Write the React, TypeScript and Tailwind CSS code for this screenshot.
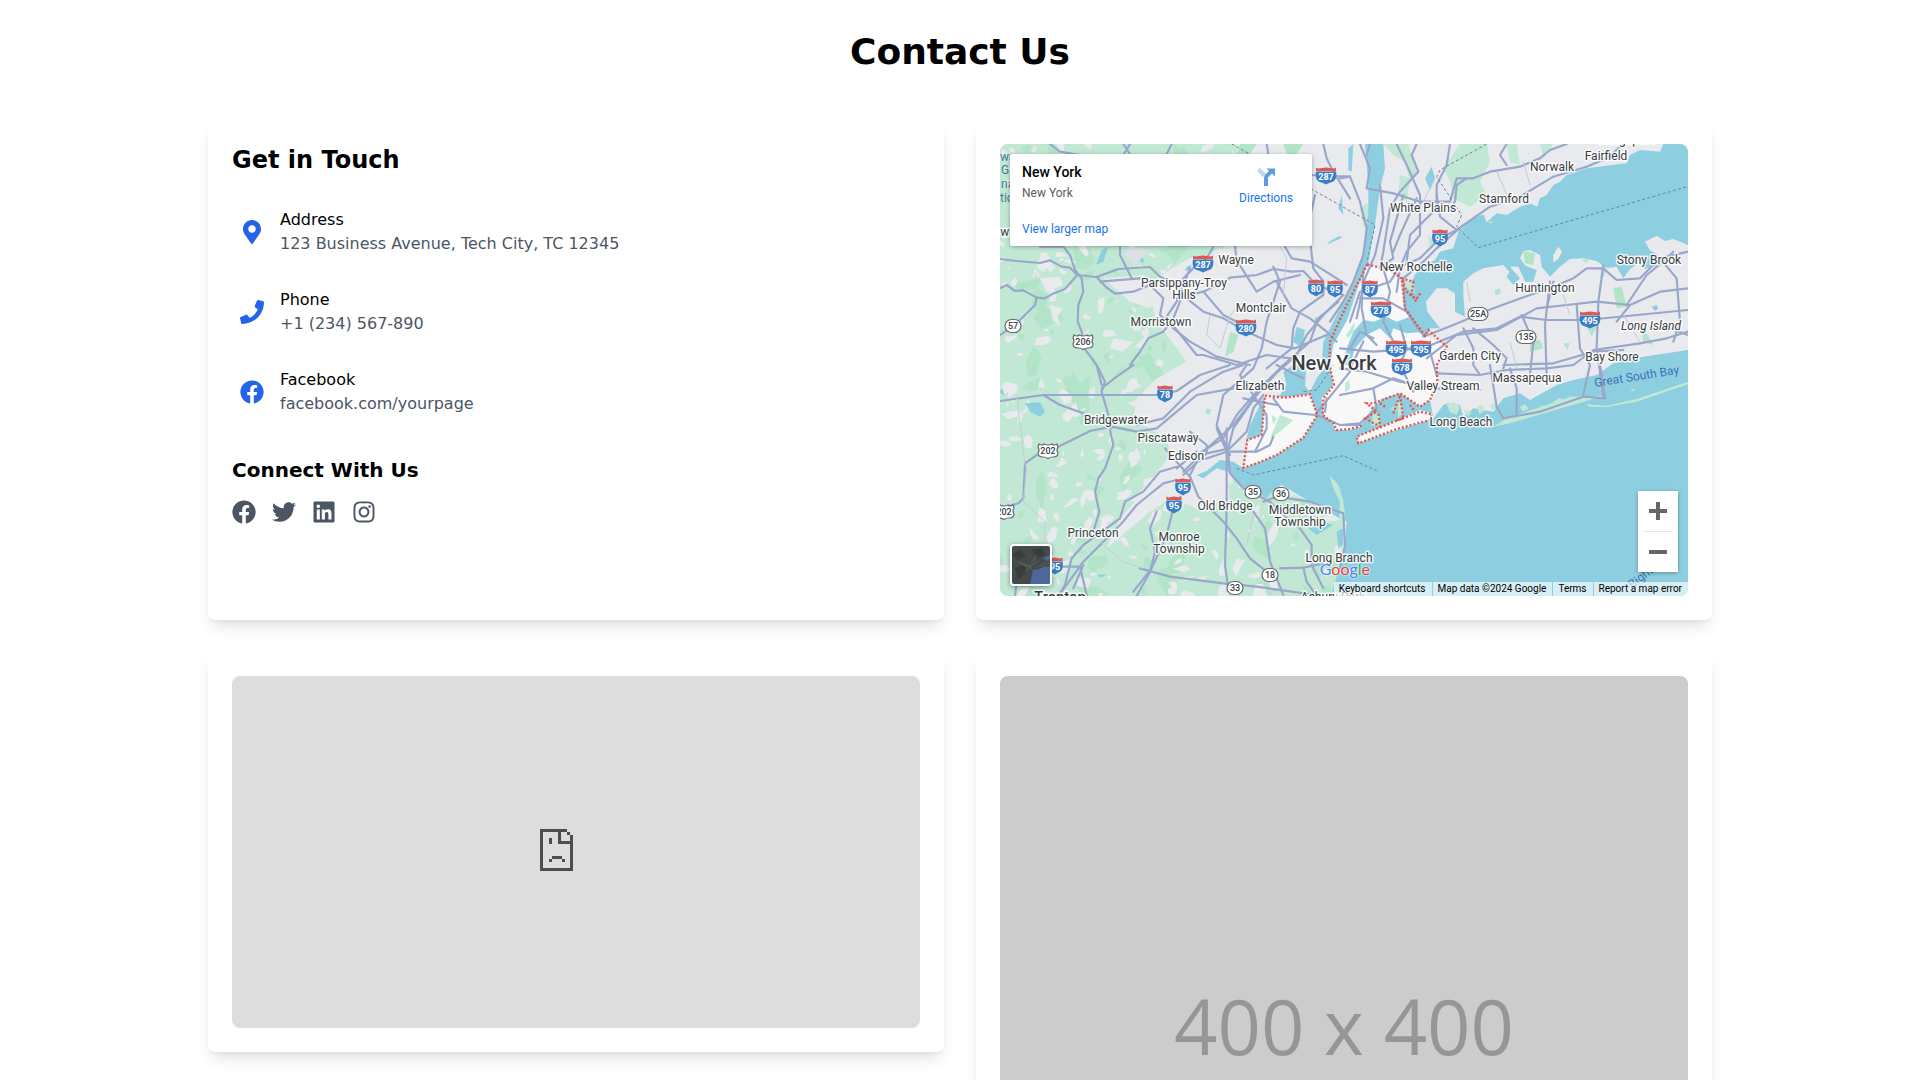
import React from "react";
import { FaFacebook, FaInstagram, FaLinkedin, FaMapMarkerAlt, FaPhone, FaTwitter } from "react-icons/fa";

const LAND = "#e8eaed";
const GREEN = "#c1e8d4";
const DEEP_GREEN = "#b2e4c8";
const WATER = "#8dcfe0";
const CITY = "#f8f8f9";
const ROAD = "#98a7ca";
const BORDER = "#e5554b";

/* Irregular parcels of farmland and forest, generated from a fixed seed. */
function parcels(seed: number, count: number, size: number): string {
  let s = seed;
  const next = () => {
    s = (s * 1103515245 + 12345) % 2147483648;
    return s / 2147483648;
  };
  let d = "";
  for (let i = 0; i < count; i++) {
    const cx = 30 + next() * 1060;
    const cy = 27 + next() * 1370;
    const tilt = next() * 3.14;
    const r = size * (0.3 + next() * 1.1);
    for (let k = 0; k < 6; k++) {
      const a = (k * 6.28) / 6;
      const q = r * (0.3 + next() * 0.9);
      const px = Math.cos(a) * q * 1.5;
      const py = Math.sin(a) * q * 0.8;
      const x = Math.round(cx + px * Math.cos(tilt) - py * Math.sin(tilt));
      const y = Math.round(cy + px * Math.sin(tilt) + py * Math.cos(tilt));
      d += `${k === 0 ? "M" : "L"}${x} ${y}`;
    }
    d += "Z";
  }
  return d;
}

const greyParcels = parcels(77, 380, 17);
const deepParcels = parcels(1234, 120, 32);

const westRoads = [
  "M30 372 L80 378 L150 384 L180 376 L215 395 L240 398 L262 420 L320 426 L385 402 L480 396 L510 425 L545 440 L590 490 L640 530 L700 550 L770 590 L860 630 L915 640 L1010 600",
  "M30 460 L50 450 L75 468 L100 466 L140 488 L165 490 L185 478 L225 462 L262 420",
  "M140 488 L135 510 L100 545 L75 570 L30 600",
  "M150 335 L220 335 L240 360 L255 405 L275 430 L280 470 L265 510 L263 560 L275 590 L283 640 L320 690 L335 750",
  "M320 426 L350 458 L375 476 L430 470 L480 450",
  "M330 440 L450 430 M390 335 L390 360 L410 400 L425 430",
  "M670 335 L650 370 L610 400 L580 430 L570 500 L550 550 L520 590 L475 610 L450 650 L420 690",
  "M480 450 L520 490 L510 540 L550 580 L600 620 L680 665 L780 690",
  "M640 470 L700 540 L740 560 M690 450 L720 428 L800 420 L850 402 L905 410 L940 408 L980 450 L1060 480",
  "M735 335 L740 375 L765 415 L800 470 L850 440 L930 420",
  "M850 395 L870 440 L830 560 L815 640 L790 700 L700 780 L680 870 L720 960",
  "M885 335 L905 370 L960 380 L1040 430 L1070 450",
  "M975 180 L955 270 L970 400 L1000 440 L1000 480 L930 530 L910 580 L905 640 L830 700",
  "M860 440 L905 520 L960 550 L1010 590 L1040 620",
  "M1060 480 L1000 540 L950 600 L920 660 L830 740 L730 870 L640 950 L580 1010",
  "M1045 500 L985 550 L960 620 L880 690 L800 780 L730 880 L710 960",
  "M540 560 L620 660 L640 660 L740 690 L830 660 L900 670",
  "M420 27 L400 60 M180 27 L210 50 L270 60 M400 27 L420 57 M530 57 L545 27",
  "M1000 27 L1010 70 L1030 110 L1080 190 M960 120 L1080 125 M830 27 L835 57",
  "M600 400 L560 500 L520 560 M700 440 L640 470 L560 490",
];

const southWestRoads = [
  "M30 108 L160 90 L330 90 L500 90 L560 78 L630 30 L720 0",
  "M320 0 L345 50 L335 80 L355 150 L365 190",
  "M160 90 L210 120 L280 145 M430 0 L380 35 L335 70",
  "M205 245 L300 198 L365 185 L440 200 L500 190 L560 140 L620 90 L730 70",
  "M440 180 L520 160 L600 80 L700 20 L760 0",
  "M360 195 L370 240 L345 310 L325 340 L315 380 L328 440 L310 500",
  "M140 270 L105 295 L100 400 L85 415 L50 425",
  "M560 305 L510 320 L460 380 L405 410 L390 460 L280 540 L245 580 L225 660 L205 693",
  "M560 345 L520 355 L440 420 L395 475 L280 590 L215 680",
  "M525 250 L560 290 L600 335 L625 395 L700 470 L740 520 L780 580 L830 620",
  "M620 260 L560 310 M600 330 L620 290 L710 260 L800 260 L840 240 L850 215",
  "M710 190 L710 430 L705 600 L715 670",
  "M680 190 L715 270 L720 325 L760 370 L840 410 L880 450 L930 490 L965 540 L965 600 L1000 670",
  "M790 440 L825 490 L840 590 L880 690",
  "M820 410 L860 395 L960 410 L1060 445 L1065 540 L1050 610",
  "M570 395 L550 430 L530 510 L485 610 L430 680",
  "M500 440 L480 490 L495 560 L480 620 L440 693",
  "M450 610 L540 635 L700 655 L800 665 L1000 693 M870 610 L940 608 L1000 595",
  "M185 605 L270 605 L290 690 M75 693 L80 650 M280 600 L250 670",
  "M820 90 L790 130 L770 200 L720 250 L650 265 L580 330",
  "M800 80 L740 150 L700 220 L620 270 M760 100 L860 120 M850 100 L880 140 L975 150 L1040 70 L1080 20",
  "M980 150 L1050 180 L1110 180 M1010 100 L1005 140 M940 608 L950 650 L980 693",
  "M770 0 L750 30 L790 90 L830 150 L830 190 L810 230 L795 260",
  "M880 0 L820 60 L780 110 M860 0 L900 20 L940 40 M600 200 L650 240 L650 265",
];

const eastRoads = [
  "M60 27 L90 100 L80 160 L160 175 L240 200 L330 200 L350 130 L400 130 L450 110 L540 95 L600 70 L630 45 L680 27",
  "M345 200 L350 150 L380 130 M290 180 L300 245 L350 285 L450 215 L540 185 L640 125 L740 95 L800 70 L850 27",
  "M0 130 L30 125 L60 200 L80 280 L70 360 L40 440 L10 500 L-30 560",
  "M170 27 L200 90 L240 180 L240 300 L200 350 L180 400 L170 470",
  "M230 27 L215 60 L235 110 L180 170 L150 220 L130 350 L120 400",
  "M330 27 L320 90 L290 150 L290 220 L210 300 L200 380",
  "M350 285 L300 310 L240 370 L180 395 L150 440 L60 470 L30 560",
  "M370 270 L290 340 L250 380 L190 430 L195 520 L240 590",
  "M190 180 L170 250 L150 320 L160 370 L130 390 M230 190 L180 300 L160 350 M120 150 L130 250 L105 360 L75 430 L50 550",
  "M70 400 L65 520 L80 600 L110 630 M130 400 L150 470 L130 560 L160 620",
  "M60 490 L130 490 L200 530 L250 600",
  "M250 605 L340 570 L460 520 L570 480 L630 460 L700 430 L740 400 L790 400 L830 435 L900 430 L960 370 L1044 350",
  "M0 640 L100 650 L250 640 L370 590 L470 580 L540 545 L620 555 L740 555 L1044 525",
  "M260 670 L350 600 L470 585 L590 520 L680 510 L770 500 L870 510 L960 470 L1044 460",
  "M400 580 L460 630 L500 670 L490 700 M370 580 L400 640 L400 690 L420 720 M545 540 L580 620 L570 720",
  "M630 440 L615 570 L620 720 M710 510 L720 640 L750 690 L730 780 M790 390 L775 500 L770 640 L790 780",
  "M860 510 L920 420 L970 380 L1000 350 M960 370 L1010 430 L1020 560 L1000 620",
  "M700 690 L760 645 L900 625 L980 610 L1044 590 M490 690 L640 685 L760 650 L850 645",
  "M290 715 L420 720 L500 705 L620 700 L700 690 M640 440 L620 520",
  "M830 560 L870 510 M0 700 L80 710 L180 740 L290 760 L420 765 M0 780 L100 760 L160 730 L250 760",
  "M450 690 L470 815 L490 850 L600 830 L730 785 L795 790 L780 690",
  "M510 700 L530 760 L530 840 M180 570 L200 640 L270 650 L290 720 M30 640 L60 590 L100 610",
  "M0 870 L60 865 L110 820 L100 760 M200 640 L180 690 L220 770 M70 620 L30 700",
  "M960 570 L1044 600 M500 27 L480 60 L500 90 M90 27 L80 60",
];

type Label = { x: number; y: number; t: string; cls?: string };
const labels: Label[] = [
  { x: 246, y: 129, t: "Wayne" },
  { x: 194, y: 152, t: "Parsippany-Troy" },
  { x: 194, y: 164, t: "Hills" },
  { x: 271, y: 177, t: "Montclair" },
  { x: 171, y: 191, t: "Morristown" },
  { x: 270, y: 255, t: "Elizabeth" },
  { x: 126, y: 289, t: "Bridgewater" },
  { x: 178, y: 307, t: "Piscataway" },
  { x: 196, y: 325, t: "Edison" },
  { x: 235, y: 375, t: "Old Bridge" },
  { x: 310, y: 379, t: "Middletown" },
  { x: 310, y: 391, t: "Township" },
  { x: 103, y: 402, t: "Princeton" },
  { x: 189, y: 406, t: "Monroe" },
  { x: 189, y: 418, t: "Township" },
  { x: 349, y: 427, t: "Long Branch" },
  { x: 433, y: 77, t: "White Plains" },
  { x: 514, y: 68, t: "Stamford" },
  { x: 562, y: 36, t: "Norwalk" },
  { x: 616, y: 25, t: "Fairfield" },
  { x: 426, y: 136, t: "New Rochelle" },
  { x: 659, y: 129, t: "Stony Brook" },
  { x: 555, y: 157, t: "Huntington" },
  { x: 661, y: 195, t: "Long Island", cls: "italic" },
  { x: 480, y: 225, t: "Garden City" },
  { x: 622, y: 226, t: "Bay Shore" },
  { x: 537, y: 247, t: "Massapequa" },
  { x: 453, y: 255, t: "Valley Stream" },
  { x: 471, y: 291, t: "Long Beach" },
  { x: 18, y: 101, t: "wn" },
];

const interstates: [number, number, string][] = [
  [336, 41, "287"], [213, 129, "287"], [326, 153, "80"], [345, 154, "95"], [256, 193, "280"],
  [450, 103, "95"], [380, 154, "87"], [391, 175, "278"], [406, 214, "495"], [431, 214, "295"],
  [412, 232, "678"], [600, 185, "495"], [175, 259, "78"], [193, 352, "95"], [184, 370, "95"], [65, 431, "95"],
];

const routes: [number, number, string][] = [
  [23, 191, "57"], [488, 179, "25A"], [536, 202, "135"], [263, 357, "35"], [291, 359, "36"], [280, 440, "18"], [245, 453, "33"],
];

const usRoutes: [number, number, string][] = [[93, 207, "206"], [58, 316, "202"], [14, 377, "202"]];

function Interstate({ x, y, n }: { x: number; y: number; n: string }) {
  const w = n.length > 2 ? 10 : 7.5;
  return (
    <g transform={`translate(${x} ${y})`}>
      <path d={`M${-w} -8.500 L${-w + 2} -7.500 L0 -8.500 L${w - 2} -7.500 L${w} -8.500 V-5 H${-w} Z`} fill="#e0584f" />
      <path
        d={`M${-w} -4.500 H${w} C${w + 1} 0 ${w} 5 ${w * 0.6} 6 Q${w * 0.2} 7 0 8.500 Q${-w * 0.2} 7 ${-w * 0.6} 6 C${-w} 5 ${-w - 1} 0 ${-w} -4.500 Z`}
        fill="#3b7dc6"
      />
      <text y="4" textAnchor="middle" className="fill-white text-[9px] font-bold">{n}</text>
    </g>
  );
}

function Route({ x, y, n }: { x: number; y: number; n: string }) {
  const w = n.length > 2 ? 10 : 8;
  return (
    <g transform={`translate(${x} ${y})`}>
      <rect x={-w} y="-6.5" width={w * 2} height="13" rx="6.5" fill="#fff" stroke="#666a6e" strokeWidth="1.2" />
      <text y="3" textAnchor="middle" className="fill-[#3c4043] text-[9px] font-medium">{n}</text>
    </g>
  );
}

function UsRoute({ x, y, n }: { x: number; y: number; n: string }) {
  return (
    <g transform={`translate(${x} ${y})`}>
      <path d="M-9 -7 Q-6 -5 -4 -7 Q0 -5 4 -7 Q6 -5 9 -7 L10 -4 Q8 -1 10 2 Q10 6 5 6 Q2 6 0 7.5 Q-2 6 -5 6 Q-10 6 -10 2 Q-8 -1 -10 -4 Z" fill="#fff" stroke="#666a6e" strokeWidth="1.2" />
      <text y="3" textAnchor="middle" className="fill-[#3c4043] text-[9px] font-medium">{n}</text>
    </g>
  );
}

function MapDrawing() {
  return (
    <svg
      viewBox="10 9 688 452"
      preserveAspectRatio="xMidYMid slice"
      className="block h-full w-full font-[Roboto,sans-serif]"
      role="img"
      aria-label="Map of New York"
    >
      <defs>
        <clipPath id="forest">
          <path d="M30 27 H740 L730 330 L690 350 L600 370 L545 400 L470 450 L500 560 L560 640 L590 680 L500 730 L440 790 L430 860 L530 900 L540 960 L480 1040 L420 1100 L520 1080 L640 1130 L690 1090 L730 1030 L790 1060 L870 1060 L1000 1120 L1060 1150 L1050 1400 H30 Z" />
        </clipPath>
      </defs>
      <g transform="scale(0.333333)">
        <rect x="0" y="0" width="2120" height="1410" fill={LAND} />
        <g clipPath="url(#forest)">
          <rect x="0" y="0" width="1100" height="1410" fill={GREEN} />
          <path d={deepParcels} fill={DEEP_GREEN} />
          <path d={greyParcels} fill={LAND} />
          <path d="M150 430 L210 425 L220 450 L170 470 Z M340 430 L460 420 L520 460 L480 520 L420 500 Z M370 610 L430 620 L400 650 L360 640 Z M180 510 L220 520 L190 560 Z M600 1020 L710 1000 L720 1100 L640 1110 Z M390 1150 L470 1060 L540 1010 L560 1080 L480 1130 L350 1240 Z" fill={LAND} />
        </g>
        <path d="M720 590 L745 600 L730 650 L705 665 Z M650 820 l15 5 l-8 14 l-12 -6 Z M750 27 L800 27 L780 57 L740 57 Z M880 27 L940 27 L920 57 L890 57 Z" fill={DEEP_GREEN} />
        <path d="M400 360 L430 335 L480 345 L430 390 Z" fill="#dcdfe4" />
        <path d="M335 345 L355 335 L340 380 L318 390 Z M1020 318 L1050 302 L1056 308 L1012 328 Z M450 372 L460 368 L462 382 L453 384 Z M920 575 L945 585 L935 640 L910 620 Z M975 548 L995 545 L970 590 Z M590 395 L605 390 L600 405 L585 408 Z" fill={WATER} />

        <g transform="translate(1050 0)">
          <path d="M130 27 H205 L215 60 L230 110 L210 140 L195 80 L160 60 Z M310 100 L360 27 H440 L450 80 L420 140 L440 180 L390 215 L340 190 L330 140 Z M500 27 H530 L540 90 L510 80 Z M600 27 H640 L610 70 Z M180 120 L210 130 L200 200 L175 180 Z M60 220 L80 205 L95 215 L85 290 L70 270 Z M265 300 L290 320 L270 345 Z" fill={GREEN} />
          <path d="M75 27 H130 L135 100 L120 160 L105 270 L85 385 L55 450 L20 560 L-20 630 L-25 690 L-55 690 L-50 620 L0 520 L50 420 L75 330 L85 230 L85 150 Z" fill={WATER} />
          <path d="M25 40 L40 27 L35 110 L25 105 Z M-5 220 L5 180 L10 240 Z M255 130 L275 95 L285 130 L270 165 Z" fill={WATER} />
          <path d="M970 27 H1044 V330 L1000 312 L975 318 L950 302 L915 320 L930 345 L955 360 L950 392 L915 402 L895 385 L870 402 L850 430 L830 395 L800 400 L770 378 L730 370 L690 372 L660 395 L630 425 L605 395 L600 360 L570 345 L550 348 L540 370 L556 392 L590 405 L580 440 L556 440 L535 395 L510 395 L540 430 L520 450 L500 425 L508 410 L490 390 L430 400 L400 415 L370 440 L370 480 L375 545 L345 530 L345 475 L320 460 L290 460 L258 500 L262 530 L300 580 L270 580 L258 605 L235 580 L200 530 L185 470 L215 440 L235 400 L285 375 L300 350 L340 340 L355 290 L400 250 L430 238 L440 262 L470 235 L500 240 L540 215 L570 205 L592 215 L600 190 L620 180 L640 150 L660 140 L680 120 L740 100 L860 85 L870 60 L900 45 L960 50 Z" fill={WATER} />
          <path d="M640 360 L655 335 L666 350 L655 372 L640 382 Z" fill={LAND} />
          <path d="M550 348 L585 355 L580 390 L555 385 Z M465 465 L480 460 L482 478 L465 480 Z M725 375 L745 372 L740 385 Z M820 460 L845 455 L860 515 L830 520 Z M740 575 L770 575 L755 605 Z M900 560 L940 630 L910 620 Z M570 620 L600 615 L610 640 L570 650 Z M440 260 L460 258 L455 267 Z M780 400 L800 395 L790 430 Z M865 680 L930 670 L910 700 L880 705 Z M30 560 L45 560 L25 610 L15 600 Z M670 625 l20 0 l-8 20 Z" fill={DEEP_GREEN} />
          <path d="M935 515 L950 510 L955 520 L945 528 Z M955 560 L965 560 L960 575 Z" fill={WATER} />
        </g>

        <g transform="translate(0 690)">
          <path d="M820 100 L780 180 L770 220 L760 310 L790 300 L840 280 L900 240 L945 215 L980 160 L970 100 L945 60 L950 0 L920 0 L900 40 L870 90 Z" fill={WATER} />
          <path d="M760 310 L790 300 L840 280 L900 240 L945 215 L980 150 L955 90 L980 40 L1010 0 L1050 0 L1030 70 L1000 110 L1000 150 L1030 180 L1035 195 L1080 195 L1110 185 L1150 125 L1180 110 L1230 85 L1290 120 L1320 105 L1330 160 L1360 120 L1375 115 L1410 120 L1420 155 L1450 130 L1510 140 L1540 100 L1590 85 L1620 105 L1700 60 L1750 45 L1820 30 L1870 -5 L1930 -20 L2094 -45 V700 H1020 L1050 600 L1065 530 L1070 470 L1040 455 L1000 430 L950 405 L900 375 L875 360 L850 375 L830 400 L780 380 L740 350 L715 320 L680 310 L640 340 L620 330 L650 318 L690 285 L730 290 Z" fill={WATER} />
          <path d="M105 115 L150 112 L165 140 L150 155 L120 140 Z M880 20 L910 0 L940 30 L925 80 L890 60 Z M320 628 l30 2 l-20 8 Z M30 80 l8 -10 l5 25 Z" fill={WATER} />
          <path d="M1018 330 L1045 360 L1058 400 L1066 450 L1055 500 L1048 460 L1050 410 L1030 370 Z" fill={GREEN} />
          <path d="M955 490 L1000 470 L1030 480 L980 510 Z M1040 500 L1060 490 L1060 540 L1045 550 Z" fill={WATER} />
          <path d="M825 92 L880 96 L960 88 L982 150 L940 218 L860 270 L800 295 L760 308 L772 225 L815 210 Z" fill={CITY} />
          <path d="M870 150 L910 165 L870 200 L840 220 Z M845 150 L860 160 L850 180 Z" fill={GREEN} />
        </g>

        <path d="M1132 388 L1200 405 L1230 430 L1245 520 L1305 602 L1370 635 L1340 690 L1340 740 L1320 795 L1290 815 L1230 775 L1180 800 L1150 815 L1110 875 L1080 882 L1040 885 L1030 870 L1000 840 L995 790 L1030 750 L1020 690 L1030 630 L1080 540 Z" fill={CITY} />
        <path d="M1240 435 L1270 440 L1275 475 L1250 460 Z M1068 600 L1095 560 L1090 590 L1075 610 Z M1065 745 l12 -10 l4 25 l-16 12 Z" fill={GREEN} />
        <path d="M1300 590 L1260 545 L1220 560 L1190 545 L1150 560 L1120 555 L1090 590 L1070 640 L1060 690 L1080 690 L1095 640 L1130 600 L1170 580 L1200 610 L1210 580 L1250 595 Z" fill={WATER} />
        <path d="M1150 815 L1180 790 L1230 775 L1290 815 L1250 850 L1200 865 L1155 870 Z" fill={WATER} />
        <path d="M1150 830 L1170 845 L1165 875 L1145 870 Z M1220 780 L1240 830 L1225 850 Z M1200 820 l18 -8 l4 16 Z" fill={GREEN} />
        <path d="M1105 925 L1100 905 L1200 865 L1290 825 L1325 835 L1320 855 L1220 885 Z" fill={CITY} />
        <path d="M1510 875 L1550 850 L1740 785 L1840 783 L1560 865 Z M1790 808 L1850 812 L1940 792 L2094 740 L2094 748 L1940 800 L1850 816 L1795 815 Z M1650 815 l20 -6 l8 12 l-20 6 Z M1690 800 l20 -12 l10 8 l-18 12 Z M1370 810 l20 -10 l20 15 l-10 25 l-20 -8 Z M1420 825 l25 5 l-10 15 Z M1460 815 l18 -8 l6 22 l-16 8 Z M1500 810 l14 -6 l4 16 l-12 6 Z M1590 815 l16 -8 l10 14 l-18 8 Z M1920 765 l15 -6 l-4 10 Z" fill={GREEN} />

        <g fill="none" stroke={ROAD} strokeWidth="6.5" strokeLinejoin="round" strokeLinecap="round">
          {westRoads.map((d) => <path key={d} d={d} />)}
          <g transform="translate(0 690)">{southWestRoads.map((d) => <path key={d} d={d} />)}</g>
          <g transform="translate(1050 0)">{eastRoads.map((d) => <path key={d} d={d} />)}</g>
        </g>
        <g fill="none" stroke="#c3cbdb" strokeWidth="3">
          <path d="M660 540 L650 600 L690 640 L720 540 L760 500 M870 335 L890 370 L880 480 M80 780 L105 990 M110 1000 L100 1100 L165 1160 L165 1220 M330 1220 L400 1280 L460 1300 M770 1230 L790 1140 M1430 440 L1440 500 M1720 480 L1740 540 M1300 200 L1330 140 M1520 110 L1560 200 M1600 80 L1620 150 M1560 620 L1580 700 M1900 540 L1950 620" />
        </g>
        <g fill="none" stroke="#6f8296" strokeWidth="3" strokeDasharray="9 7">
          <path d="M725 27 L1155 270 L1130 385 M2088 156 L1465 338 L1400 275 L1415 240 L1340 125 L1350 105 L1490 27 M940 770 L980 765 L1030 690 M740 1000 L790 1020 L1060 962 L1160 1007" />
        </g>
        <g fill="none" stroke={BORDER} strokeWidth="7" strokeDasharray="6 6">
          <path d="M1132 388 L1070 510 L1020 620 L1018 690 L1032 750 L1000 790 L998 840 L1030 865 L1040 885 L1080 882 L1115 872 M1132 388 L1200 405 L1235 430 L1245 520 L1305 602 L1315 585 L1370 635 L1340 690 L1342 740 L1320 795 L1290 815 L1230 775 L1150 805 L1130 805 L1160 830 L1125 850 L1170 875 L1165 830 M1235 430 L1270 440 L1265 480 L1280 495 L1250 470 Z M1290 475 L1275 500 M1105 925 L1100 905 L1200 865 L1290 830 L1325 838 L1320 855 L1220 882 Z M1210 835 L1230 780 L1240 850 L1220 855 M1260 810 L1275 830 M1170 805 L1185 815" />
          <path d="M825 782 L880 788 L960 778 L982 840 L940 908 L860 960 L800 985 L760 998 L772 915 L815 900 Z" />
        </g>
      </g>

      {interstates.map(([x, y, n], i) => <Interstate key={i} x={x} y={y} n={n} />)}
      {routes.map(([x, y, n]) => <Route key={n} x={x} y={y} n={n} />)}
      {usRoutes.map(([x, y, n], i) => <UsRoute key={i} x={x} y={y} n={n} />)}
      <g textAnchor="middle" className="fill-[#3a3d41] stroke-white/80 stroke-[3px] text-[12px] [paint-order:stroke]" strokeLinejoin="round">
        {labels.map((l, i) => (
          <text key={i} x={l.x} y={l.y} className={l.cls}>{l.t}</text>
        ))}
        <text x="344" y="235" className="text-[20px] font-medium">New York</text>
        <text x="70" y="467" className="text-[15px] font-medium">Trenton</text>
        <text x="343" y="466">Asbury Park</text>
        <text x="636" y="9">Bridgeport</text>
      </g>
      <g className="fill-[#3f7f95] text-[12px]">
        <text x="10" y="26">wa</text>
        <text x="11" y="39">G</text>
        <text x="11" y="53">na</text>
        <text x="10" y="67">tio</text>
      </g>
      <g className="fill-[#4270b8] text-[12px]">
        <text transform="translate(605 252) rotate(-9)">Great South Bay</text>
        <text transform="translate(642 454) rotate(-38)">Bight</text>
      </g>
    </svg>
  );
}

function MapView() {
  return (
    <div className="relative h-[452px] w-full overflow-hidden rounded-lg font-[Roboto,sans-serif]">
      <MapDrawing />

      <div className="absolute top-[10px] left-[10px] flex h-[92px] w-[302px] justify-between rounded-xs bg-white py-[9px] pr-[19px] pl-3 shadow-[0_1px_4px_rgba(0,0,0,0.3)]">
        <div className="flex flex-col">
          <div className="text-[14px] leading-[18px] font-medium text-black">New York</div>
          <div className="mt-1 text-[12px] leading-4 text-[#5b5b5b]">New York</div>
          <a href="#map" className="mt-5 text-[12px] leading-4 text-[#1a73e8]">View larger map</a>
        </div>
        <a href="#directions" className="flex flex-col items-center pt-[5px] text-[12px] leading-4 text-[#1a73e8]">
          <svg viewBox="0 0 18 18" className="mb-1 size-[18px]" aria-hidden="true">
            <path d="M0 3 L3 0 L9 6 L6 9 Z" fill="#b5dbea" />
            <path d="M7 18 V10 Q7 8 8 7 L12 3 L9.500 0.500 H18 V8.500 L15 5.500 L11 9.500 V18 Z" fill="#5f9bdf" />
          </svg>
          Directions
        </a>
      </div>

      <button
        type="button"
        aria-label="Show satellite imagery"
        className="absolute bottom-[10px] left-[10px] size-[42px] overflow-hidden rounded-sm border-2 border-white shadow-[0_1px_4px_rgba(0,0,0,0.4)]"
      >
        <svg viewBox="0 0 38 38" className="block size-full" aria-hidden="true">
          <rect width="38" height="38" fill="#444a48" />
          <path d="M0 8 L8 4 L14 10 L6 14 Z M20 4 L30 2 L34 9 L26 12 Z M3 22 L12 19 L15 27 L6 33 Z" fill="#383d3b" />
          <path d="M38 9 L31 12 L34 15 L29 18 L33 20 L27 23 L21 24 L20 29 L18 38 H38 Z" fill="#4d6799" />
          <path d="M38 13 L28 18 L22 21 L38 21 Z" fill="#4a5055" />
          <path d="M10 18 L18 20 L26 15 M18 20 L21 25 M18 20 L13 27 M20 16 L25 9 M15 20 L6 16" stroke="#65706d" strokeWidth=".7" fill="none" />
        </svg>
      </button>

      <div className="absolute right-[10px] bottom-6 flex w-10 flex-col items-center bg-white shadow-[0_1px_4px_rgba(0,0,0,0.3)]">
        <button type="button" aria-label="Zoom in" className="flex size-10 items-center justify-center">
          <svg viewBox="0 0 18 18" className="size-[18px]" aria-hidden="true"><path d="M7 0 H11 V7 H18 V11 H11 V18 H7 V11 H0 V7 H7 Z" fill="#666" /></svg>
        </button>
        <div className="h-px w-[30px] bg-[#e6e6e6]" />
        <button type="button" aria-label="Zoom out" className="flex size-10 items-center justify-center">
          <svg viewBox="0 0 18 18" className="size-[18px]" aria-hidden="true"><path d="M0 7 H18 V11 H0 Z" fill="#666" /></svg>
        </button>
      </div>

      <div className="absolute right-0 bottom-0 flex flex-col items-start">
        <div aria-label="Google" className="-ml-[14px] pb-[3px] font-[Lato,sans-serif] text-[16px] leading-5 [text-shadow:0_0_2px_#fff,0_0_2px_#fff]">
          <span className="text-[#4285f4]">G</span>
          <span className="text-[#ea4335]">o</span>
          <span className="text-[#ea4335]">o</span>
          <span className="text-[#4285f4]">g</span>
          <span className="text-[#34a853]">l</span>
          <span className="text-[#ea4335]">e</span>
        </div>
        <div className="flex h-[14px] items-center divide-x divide-[#8dcfe0] bg-white/65 text-[10px] leading-[14px] text-black">
          <button type="button" className="pr-[6px] pl-[5px]">Keyboard shortcuts</button>
          <span className="pr-[6px] pl-[5px]">Map data ©2024 Google</span>
          <a href="#terms" className="pr-[6px] pl-[5px]">Terms</a>
          <a href="#report" className="pr-[6px] pl-[5px]">Report a map error</a>
        </div>
      </div>
    </div>
  );
}

const contacts = [
  { Icon: FaMapMarkerAlt, title: "Address", text: "123 Business Avenue, Tech City, TC 12345" },
  { Icon: FaPhone, title: "Phone", text: "+1 (234) 567-890" },
  { Icon: FaFacebook, title: "Facebook", text: "facebook.com/yourpage" },
];

const socials = [
  { Icon: FaFacebook, name: "Facebook" },
  { Icon: FaTwitter, name: "Twitter" },
  { Icon: FaLinkedin, name: "LinkedIn" },
  { Icon: FaInstagram, name: "Instagram" },
];

function Card({ children }: { children: React.ReactNode }) {
  return <section className="rounded-lg bg-white p-6 shadow-lg">{children}</section>;
}

export default function App() {
  return (
    <main className="mx-auto max-w-screen-2xl bg-white px-4 py-8 font-['DejaVu_Sans',sans-serif] text-black">
      <h1 className="mb-12 text-center text-4xl font-bold">Contact Us</h1>

      <div className="grid grid-cols-1 items-start gap-8 lg:grid-cols-2">
        <div className="flex self-stretch *:flex-1">
          <Card>
            <h2 className="mb-6 text-2xl font-bold">Get in Touch</h2>
            <ul className="space-y-4">
              {contacts.map(({ Icon, title, text }) => (
                <li key={title} className="flex items-center gap-4 p-2">
                  <Icon className="size-6 shrink-0 text-[#2563eb]" />
                  <div>
                    <h3>{title}</h3>
                    <p className="text-[#4b5563]">{text}</p>
                  </div>
                </li>
              ))}
            </ul>
            <h3 className="mt-8 mb-4 text-xl font-bold">Connect With Us</h3>
            <div className="flex gap-4">
              {socials.map(({ Icon, name }) => (
                <a key={name} href={`#${name}`} aria-label={name} className="text-[#4b5563]">
                  <Icon className="size-6" />
                </a>
              ))}
            </div>
          </Card>
        </div>

        <Card>
          <MapView />
        </Card>

        <Card>
          <div className="flex h-[352px] items-center overflow-hidden rounded-lg bg-[#dddddd]">
            <div className="flex w-[648px] justify-center pb-1">
              <svg viewBox="0 0 33 42" className="h-[42px] w-[33px]" shapeRendering="crispEdges" role="img" aria-label="Content unavailable" fill="#4b4f4b">
                <path d="M0 0 H27 V3 H21 V12 H30 V6 H33 V42 H0 Z M3 3 V39 H30 V15 H18 V3 Z" fillRule="evenodd" />
                <path d="M27 3 H30 V6 H27 Z M9 9 H12 V15 H9 Z M12 27 H22 V30 H12 Z M9 30 H12 V33 H9 Z M22 30 H25 V33 H22 Z" />
              </svg>
            </div>
          </div>
        </Card>

        <Card>
          <div className="flex h-[704px] items-center justify-center rounded-lg bg-[#cccccc] pb-1 font-['Open_Sans',sans-serif] text-[76px] leading-none font-medium text-[#969696]">
            400 x 400
          </div>
        </Card>
      </div>
    </main>
  );
}
